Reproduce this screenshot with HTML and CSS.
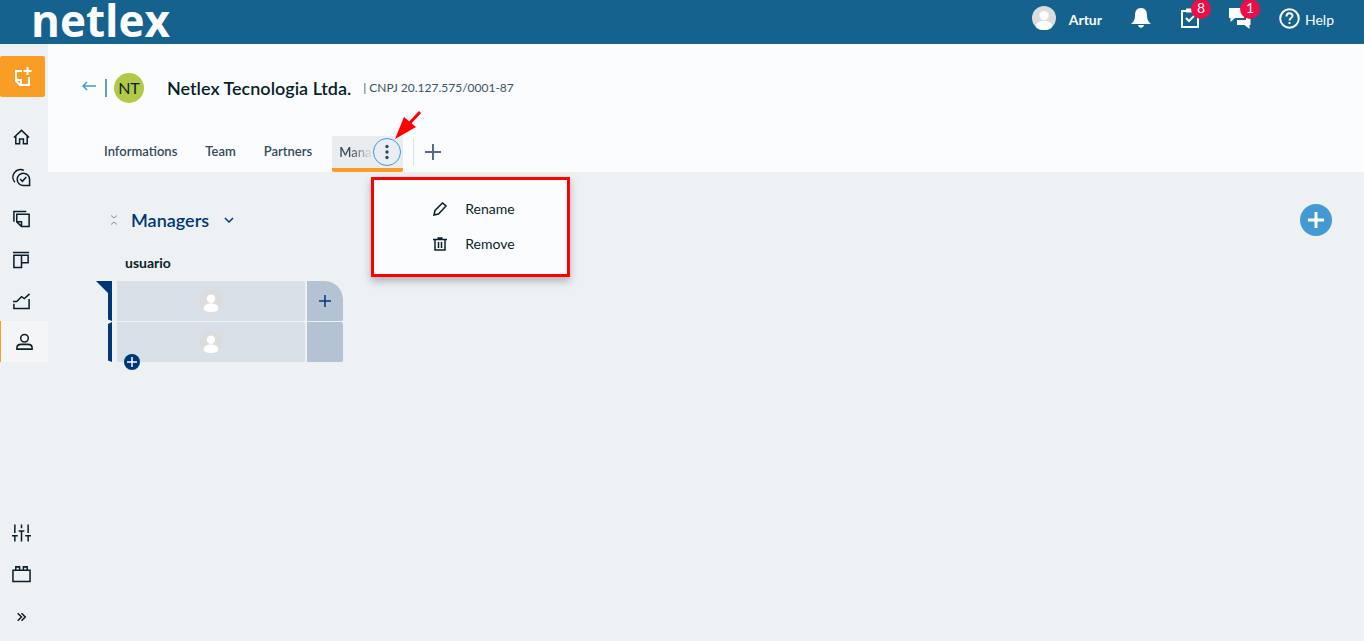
FILE: index.html
```html
<!DOCTYPE html>
<html lang="en">
<head>
<meta charset="utf-8">
<title>Netlex</title>
<link rel="stylesheet" href="styles.css">
</head>
<body>
<svg class="defs" aria-hidden="true">
  <symbol id="avatar" viewBox="0 0 24 24"><circle cx="12" cy="12" r="12" fill="#dcdcdc"/><circle cx="12" cy="9.500" r="4.600" fill="#fff"/><path d="M4 20.500c0-4 3.600-5.800 8-5.800s8 1.800 8 5.800c0 2.200-3.500 3.500-8 3.500s-8-1.300-8-3.500z" fill="#fff"/></symbol>
</svg>
<header class="topbar">
  <a class="logo" href="#">netlex</a>
  <div class="topbar-actions">
    <button class="user"><svg class="user-pic"><use href="#avatar"/></svg><span>Artur</span></button>
    <button class="top-icon" aria-label="Notifications"><svg width="20" height="20" viewBox="0 0 20 20"><path fill="#fbfcfe" d="M10 0c4.500 0 6 3.500 6 7.500 0 4 1 6 4 8.500H0c3-2.500 4-4.500 4-8.500C4 3.500 5.500 0 10 0zM7 17h6c-.5 3.500-5.500 3.500-6 0z"/></svg></button>
    <button class="top-icon" aria-label="Tasks"><svg width="20" height="22" viewBox="0 0 20 22" stroke="#fbfcfe" stroke-width="2"><path d="M2 4h16v16H2z"/><path d="M6 3.500h8" stroke-width="4"/><path d="M6 11l3 3 5-5"/></svg><span class="badge">8</span></button>
    <button class="top-icon" aria-label="Messages"><svg width="22" height="22" viewBox="0 0 22 22"><path fill="#fbfcfe" d="M0 1h15v10H6l-4.500 4V11H0zM17 7h4.500v11h-1v4l-5-4H8v-5h9z"/></svg><span class="badge">1</span></button>
    <button class="help"><svg width="21" height="21" viewBox="0 0 21 21" stroke="#fbfcfe" stroke-width="2"><circle cx="10.500" cy="10.500" r="9.300"/><path d="M7.500 8.500c0-4.300 6-4 6-.7 0 2.200-3 2.200-3 4.700M10.500 14v2"/></svg><span>Help</span></button>
  </div>
</header>
<div class="shell">
  <nav class="sidebar" aria-label="Main">
    <button class="create" aria-label="New document"><svg width="20" height="20" viewBox="0 0 20 20" stroke="#fff" stroke-width="2"><path d="M9 4H3v10l4 4h9v-8M3 13h5v5M14.500 0v8M10.500 4h8"/></svg></button>
    <a class="item" href="#" aria-label="Home"><svg viewBox="0 0 20 20"><path d="M2 10.500L10 3l8 7.500M4 9v8h4v-5h4v5h4V9"/></svg></a>
    <a class="item" href="#" aria-label="Approvals"><svg viewBox="0 0 20 20"><path d="M12 18a6.500 6.500 0 1 1 6.500-6.500V18zM8.500 11l2.500 2.500 4-4.500M3 14.500A8 8 0 0 1 12.500 2"/></svg></a>
    <a class="item" href="#" aria-label="Documents"><svg viewBox="0 0 20 20"><path d="M5 5h13v13h-8l-5-5zM5 13h5v5M15 2H2v11"/></svg></a>
    <a class="item" href="#" aria-label="Boards"><svg viewBox="0 0 20 20"><path d="M1 2h17M2 5h8v13H2zM10 5h7v8h-7z"/></svg></a>
    <a class="item" href="#" aria-label="Reports"><svg viewBox="0 0 20 20"><path d="M1 10.500h4l5-5 3 2 5.500-5M2 13v5h16V8"/></svg></a>
    <a class="item active" href="#" aria-label="People"><svg viewBox="0 0 20 20"><circle cx="10" cy="6" r="4"/><path d="M2 17.500v-1.500c0-2.500 2-3.500 4.500-3.500h7c2.500 0 4.500 1 4.500 3.500v1.500z"/></svg></a>
    <div class="spacer"></div>
    <a class="item" href="#" aria-label="Settings"><svg viewBox="0 0 20 20"><path d="M3 1v9M3 13v6M0 13h6M10 1v4M10 8v11M7 8h6M17 1v9M17 13v6M14 13h6"/></svg></a>
    <a class="item" href="#" aria-label="Modules"><svg viewBox="0 0 20 20"><path d="M1 6h18v12H1zM4 6V2.500h4V6M12 6V2.500h4V6"/></svg></a>
    <button class="item expand" aria-label="Expand"><svg viewBox="0 0 20 20"><path d="M6 6l4 4-4 4M10 6l4 4-4 4"/></svg></button>
  </nav>
  <main class="main">
    <section class="page-head">
      <div class="title-row">
        <a class="back" href="#" aria-label="Back"><svg width="14" height="10" viewBox="0 0 14 10"><path d="M14 5H1M5 1L1 5l4 4"/></svg></a>
        <span class="initials">NT</span>
        <h1>Netlex Tecnologia Ltda.</h1>
        <span class="cnpj">| CNPJ 20.127.575/0001-87</span>
      </div>
      <div class="tabs">
        <button class="tab">Informations</button>
        <button class="tab">Team</button>
        <button class="tab">Partners</button>
        <div class="tab-current">
          <button class="tab-name">Mana</button>
          <button class="kebab" aria-label="Tab options"><svg width="6" height="16" viewBox="0 0 6 16"><g fill="#35495a"><circle cx="3" cy="2.500" r="1.700"/><circle cx="3" cy="8" r="1.700"/><circle cx="3" cy="13.500" r="1.700"/></g></svg></button>
          <svg class="pointer" width="28" height="30" viewBox="0 0 28 30"><path d="M26 2L14 15" stroke="#f00" stroke-width="3"/><path d="M1 29L10 7l12 10z" fill="#f00"/></svg>
          <div class="menu">
            <button><svg width="14" height="14" viewBox="0 0 14 14"><path d="M1 13l1-4.500L9.500 1l3.500 3L5.500 12z"/></svg>Rename</button>
            <button><svg width="14" height="14" viewBox="0 0 14 14"><path d="M0 2.500h14M4.500 1h5M2 3v10h10V3M5.500 5v6M8.500 5v6"/></svg>Remove</button>
          </div>
        </div>
        <button class="add-tab" aria-label="Add tab"><svg width="16" height="16" viewBox="0 0 16 16"><path d="M8 0v16M0 8h16"/></svg></button>
      </div>
    </section>
    <section class="content">
      <div class="group">
        <div class="group-head">
          <button class="collapse" aria-label="Collapse"><svg width="8" height="12" viewBox="0 0 8 12"><path d="M1 1.500l3 2.500 3-2.500M1 10.500L4 8l3 2.500"/></svg></button>
          <h2>Managers</h2>
          <button class="chev" aria-label="Group options"><svg width="10" height="6" viewBox="0 0 10 6"><path d="M1 1l4 4 4-4"/></svg></button>
        </div>
        <table class="grid">
          <thead><tr><td></td><th scope="col">usuario</th><td></td></tr></thead>
          <tbody>
            <tr><td class="rail"><svg width="16" height="40" viewBox="0 0 16 40"><path d="M0 0h16v40l-4-1.500V12z"/></svg></td><td class="cell"><svg class="pic"><use href="#avatar"/></svg></td><td class="side top"><button aria-label="Add column"><svg width="12" height="12" viewBox="0 0 12 12"><path d="M6 0v12M0 6h12"/></svg></button></td></tr>
            <tr><td class="rail"><svg width="16" height="40" viewBox="0 0 16 40"><path d="M12 2l4-2v40l-4-1.500z"/></svg></td><td class="cell"><svg class="pic"><use href="#avatar"/></svg><button class="add-row" aria-label="Add row"><svg width="10" height="10" viewBox="0 0 10 10"><path d="M5 0v10M0 5h10"/></svg></button></td><td class="side"></td></tr>
          </tbody>
        </table>
      </div>
      <button class="add-group" aria-label="Add group"><svg width="16" height="16" viewBox="0 0 16 16"><path d="M8 0v16M0 8h16"/></svg></button>
    </section>
  </main>
</div>
</body>
</html>
```
FILE: styles.css
```css
* { box-sizing: border-box; }
body { margin: 0; min-height: 100vh; display: flex; flex-direction: column; font: 14px/20px Lato, sans-serif; color: #0b1f2a; background: #eef1f4; }
button { border: 0; padding: 0; background: none; font: inherit; color: inherit; cursor: pointer; }
a { color: inherit; text-decoration: none; }
svg { display: block; fill: none; }
.defs { display: none; }

.topbar { height: 44px; display: flex; justify-content: space-between; align-items: flex-start; padding: 0 30px 0 31px; background: #16628f; color: #fbfcfe; }
.logo { font: 700 44px/40px "Open Sans", sans-serif; }
.topbar-actions { display: flex; align-items: center; height: 36px; }
.user { display: flex; align-items: center; gap: 13px; font-weight: 700; margin-right: 29px; }
.user span, .help span { padding-top: 3px; }
.user-pic { width: 24px; height: 24px; }
.top-icon { position: relative; margin-right: 29px; }
.top-icon:nth-of-type(4) { margin-right: 28px; }
.badge { position: absolute; left: 11px; top: -8px; width: 20px; height: 20px; border-radius: 50%; background: #ee0d46; line-height: 18px; text-align: center; }
.help { display: flex; align-items: center; gap: 5px; }

.shell { flex: 1; display: flex; }
.sidebar { width: 48px; display: flex; flex-direction: column; padding: 12px 0 1px; }
.create { width: 45px; height: 41px; margin-bottom: 19px; border-radius: 2px; background: #f99d27; display: flex; align-items: center; justify-content: center; }
.item { height: 41px; display: flex; align-items: center; padding-left: 12px; }
.item svg { width: 19px; height: 20px; stroke: #0b1f2a; stroke-width: 1.6; }
.item.active { border-left: 1px solid #f99d27; background: #f3f5f7; padding-left: 14px; }
.spacer { flex: 1; }
.expand { height: 46px; }

.main { flex: 1; min-width: 0; display: flex; flex-direction: column; }
.page-head { background: #fbfcfe; height: 128px; padding: 28px 32px 0 34px; display: flex; flex-direction: column; justify-content: space-between; }
.title-row { display: flex; align-items: center; }
.back { padding: 0 9px 4px 0; }
.back svg { stroke: #4399d3; stroke-width: 1.5; }
.initials { display: flex; align-items: center; justify-content: center; width: 39px; height: 18px; padding-left: 7px; margin-right: 23px; border-left: 2px solid #5f9fc0; font-size: 16px; isolation: isolate; position: relative; }
.initials::before { content: ""; position: absolute; z-index: -1; left: 7px; top: -6px; width: 30px; height: 30px; border-radius: 50%; background: #b1c944; }
h1 { margin: 0 12px 0 0; font-size: 18px; line-height: 32px; font-weight: 600; }
.cnpj { font-size: 12px; color: #3c5361; }
.tabs { display: flex; align-items: center; padding-left: 22px; font-size: 13px; font-weight: 600; color: #35495a; height: 36px; }
.tab { height: 32px; padding-bottom: 6px; margin-right: 28px; }
.tab-current { position: relative; width: 71px; height: 36px; margin-left: -8px; padding-left: 7px; display: flex; border-bottom: 4px solid #f99d27; border-radius: 2px; background: #eaedf0; }
.tab-name { width: 34px; color: transparent; background: linear-gradient(90deg, #35495a 30%, #eaedf0); background-clip: text; -webkit-background-clip: text; text-align: left; }
.kebab { flex: none; width: 28px; height: 28px; margin-top: 2px; border: 1px solid #4399d3; border-radius: 50%; display: flex; align-items: center; justify-content: center; background: #e8eef3; }
.pointer { position: absolute; left: 62px; top: -26px; z-index: 3; }
.add-tab { margin: 0 0 4px 10px; padding-left: 11px; height: 28px; border-left: 1px solid #dde2e6; }
.add-tab svg { stroke: #566b80; stroke-width: 2; }
.menu { position: absolute; left: 39px; top: 41px; z-index: 2; width: 199px; padding: 11px 0 13px; border: 3px solid #f00; background: #fbfcfe; box-shadow: 0 4px 8px rgba(11, 31, 42, .3); font-size: 14px; font-weight: 400; color: #0b1f2a; }
.menu button { width: 100%; height: 35px; padding-left: 59px; display: flex; align-items: center; gap: 18px; }
.menu svg { stroke: #0b1f2a; stroke-width: 1.5; }

.content { flex: 1; display: flex; justify-content: space-between; align-items: flex-start; padding: 32px 32px 0 48px; }
.group-head { display: flex; align-items: center; height: 31px; padding-left: 14px; }
.collapse svg { stroke: #7c8c98; }
h2 { margin: 0 15px 0 13px; font-size: 18px; line-height: 30px; font-weight: 600; color: #003777; }
.chev svg { stroke: #003777; stroke-width: 1.5; }
.grid { border-spacing: 0; margin-top: 18px; }
.grid td, .grid th { padding: 0; }
.grid th { height: 28px; padding-left: 13px; text-align: left; vertical-align: top; font-size: 14px; line-height: 20px; font-weight: 700; }
.grid .rail { width: 16px; vertical-align: top; }
.rail svg path { fill: #003777; }
.cell, .side { height: 41px; background: #d8dfe6; background-clip: padding-box; border: 0 solid transparent; border-bottom-width: 1px; border-radius: 2px; }
.grid .cell { position: relative; width: 193px; border-left-width: 5px; }
.pic { width: 22px; height: 24px; margin: 0 auto; }
.grid .side { width: 38px; border-left-width: 2px; background-color: #b4c3d4; }
.grid .top { border-top-right-radius: 18px; }
.side button { display: block; margin: 0 auto; stroke: #003777; stroke-width: 1.5; }
.add-row { position: absolute; left: 7px; bottom: -8px; width: 16px; height: 16px; border-radius: 50%; background: #003777; display: flex; align-items: center; justify-content: center; }
.add-row svg { stroke: #fff; stroke-width: 1.5; }
.add-group { width: 32px; height: 32px; border-radius: 50%; background: #4399d3; display: flex; align-items: center; justify-content: center; }
.add-group svg { stroke: #fff; stroke-width: 3; }
```
